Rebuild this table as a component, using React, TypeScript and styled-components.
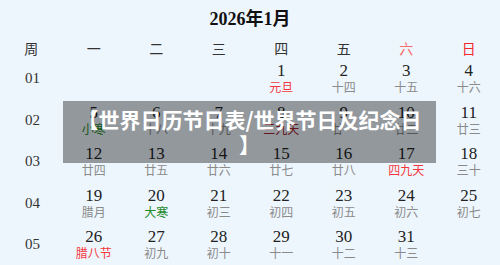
import styled, { createGlobalStyle } from "styled-components";

type Day = {
  num: number;
  lunar: string;
  tone?: "red" | "green" | "dark";
};

const GlobalStyle = createGlobalStyle`
  html, body {
    margin: 0;
    padding: 0;
    background: #eef6fd;
  }
  body {
    width: 500px;
    height: 265px;
    overflow: hidden;
  }
`;

const headers = ["周", "一", "二", "三", "四", "五", "六", "日"];

const weeks: { no: string; days: (Day | null)[] }[] = [
  {
    no: "01",
    days: [
      null,
      null,
      null,
      { num: 1, lunar: "元旦", tone: "red" },
      { num: 2, lunar: "十四" },
      { num: 3, lunar: "十五" },
      { num: 4, lunar: "十六" },
    ],
  },
  {
    no: "02",
    days: [
      { num: 5, lunar: "小寒", tone: "green" },
      { num: 6, lunar: "十八" },
      { num: 7, lunar: "十九" },
      { num: 8, lunar: "三九天", tone: "dark" },
      { num: 9, lunar: "廿一" },
      { num: 10, lunar: "廿二" },
      { num: 11, lunar: "廿三" },
    ],
  },
  {
    no: "03",
    days: [
      { num: 12, lunar: "廿四" },
      { num: 13, lunar: "廿五" },
      { num: 14, lunar: "廿六" },
      { num: 15, lunar: "廿七" },
      { num: 16, lunar: "廿八" },
      { num: 17, lunar: "四九天", tone: "red" },
      { num: 18, lunar: "三十" },
    ],
  },
  {
    no: "04",
    days: [
      { num: 19, lunar: "腊月" },
      { num: 20, lunar: "大寒", tone: "green" },
      { num: 21, lunar: "初三" },
      { num: 22, lunar: "初四" },
      { num: 23, lunar: "初五" },
      { num: 24, lunar: "初六" },
      { num: 25, lunar: "初七" },
    ],
  },
  {
    no: "05",
    days: [
      { num: 26, lunar: "腊八节", tone: "red" },
      { num: 27, lunar: "初九" },
      { num: 28, lunar: "初十" },
      { num: 29, lunar: "十一" },
      { num: 30, lunar: "十二" },
      { num: 31, lunar: "十三" },
      null,
    ],
  },
];

const toneColor = {
  red: "#f4363c",
  green: "#1f8a2a",
  dark: "#a5222a",
};

export default function App() {
  return (
    <>
      <GlobalStyle />
      <Page>
        <Title>2026年1月</Title>
        <Grid>
          {headers.map((h, i) => (
            <HeadCell key={h} $weekend={i === 6 ? "sat" : i === 7 ? "sun" : undefined}>
              {h}
            </HeadCell>
          ))}
        </Grid>
        <Grid>
          {weeks.map((w) => (
            <Row key={w.no}>
              <WeekNo>{w.no}</WeekNo>
              {w.days.map((d, i) => (
                <DayCell key={i}>
                  {d && (
                    <>
                      <Num>{d.num}</Num>
                      <Lunar $tone={d.tone}>{d.lunar}</Lunar>
                    </>
                  )}
                </DayCell>
              ))}
            </Row>
          ))}
        </Grid>
        <Banner>
          【世界日历节日表/世界节日及纪念日
          <br />】
        </Banner>
      </Page>
    </>
  );
}

const Page = styled.div`
  position: relative;
  width: 500px;
  height: 265px;
  background: #eef6fd;
  color: #222;
`;

const Title = styled.div`
  height: 38px;
  line-height: 38px;
  text-align: center;
  font-family: "Liberation Serif", "Noto Sans CJK SC", serif;
  font-weight: bold;
  font-size: 18px;
  color: #111;
`;

const Grid = styled.div`
  display: grid;
  grid-template-columns: repeat(8, 1fr);
`;

const Row = styled.div`
  display: contents;
`;

const HeadCell = styled.div<{ $weekend?: "sat" | "sun" }>`
  height: 20px;
  line-height: 20px;
  text-align: center;
  font-family: "Noto Sans CJK SC", sans-serif;
  font-size: 14px;
  color: ${(p) => (p.$weekend === "sat" ? "#f76a6a" : p.$weekend === "sun" ? "#f4262c" : "#333")};
`;

const WeekNo = styled.div`
  height: 41.5px;
  display: flex;
  align-items: center;
  padding-left: 25px;
  font-family: "Liberation Serif", serif;
  font-size: 15px;
  color: #333;
`;

const DayCell = styled.div`
  height: 41.5px;
  display: flex;
  flex-direction: column;
  align-items: center;
  justify-content: center;
`;

const Num = styled.div`
  font-family: "Liberation Serif", serif;
  font-size: 17px;
  line-height: 15px;
  color: #222;
`;

const Lunar = styled.div<{ $tone?: "red" | "green" | "dark" }>`
  font-family: "Noto Sans CJK SC", sans-serif;
  font-size: 12px;
  line-height: 15px;
  margin-top: 1px;
  color: ${(p) => (p.$tone ? toneColor[p.$tone] : "#8a8a8a")};
`;

const Banner = styled.div`
  position: absolute;
  left: 63px;
  top: 101px;
  width: 373px;
  height: 62px;
  box-sizing: border-box;
  padding: 6px 8px;
  background: rgba(0, 0, 0, 0.38);
  color: #fff;
  font-family: "Noto Sans CJK SC", sans-serif;
  font-weight: bold;
  font-size: 21px;
  line-height: 25px;
  text-align: center;
`;
